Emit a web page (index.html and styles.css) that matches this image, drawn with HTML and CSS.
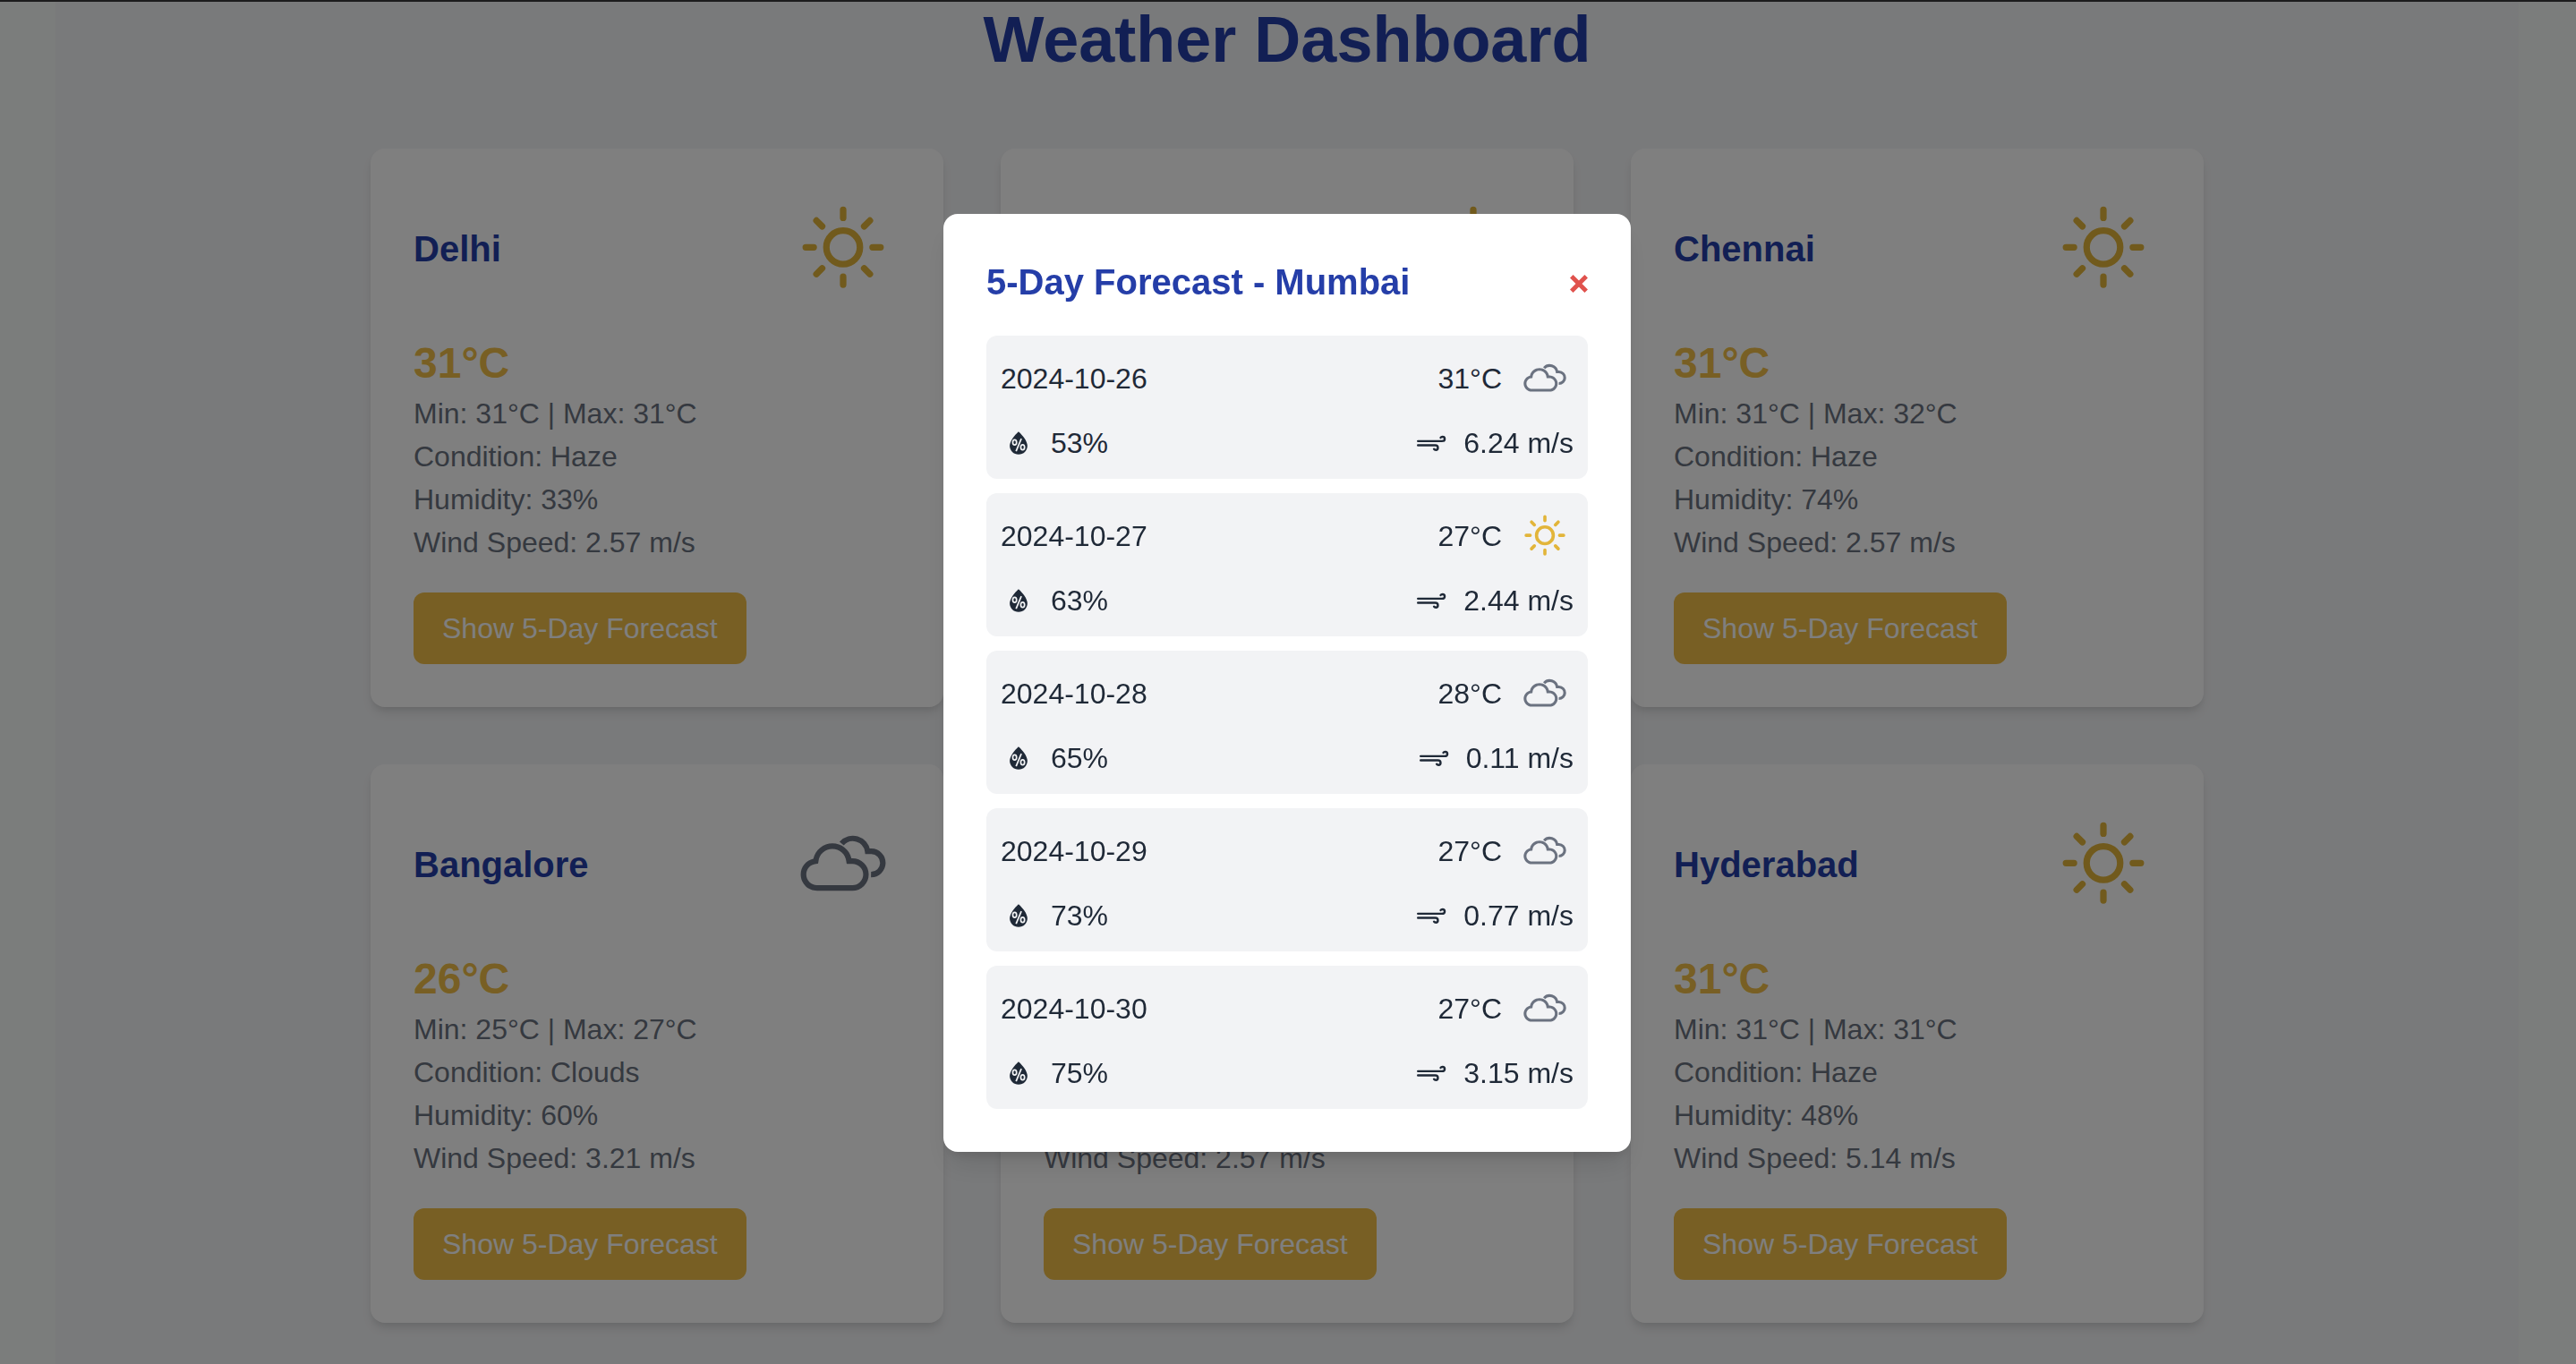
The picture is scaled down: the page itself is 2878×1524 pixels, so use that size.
FILE: index.html
```html
<!DOCTYPE html>
<html lang="en">
<head>
<meta charset="utf-8">
<meta name="viewport" content="width=device-width, initial-scale=1">
<title>Weather Dashboard</title>
<link rel="stylesheet" href="styles.css">
</head>
<body>
<svg class="sprite" aria-hidden="true">
  <symbol id="sun" viewBox="0 0 30 30">
    <g fill="none" stroke="currentColor" stroke-width="1.7" stroke-linecap="round">
      <circle cx="15" cy="14.61" r="4.4"/>
      <path d="M15 4.8v2.1M15 22.3v2.1M5.2 14.61h2.1M22.7 14.61h2.1M8 7.61l1.5 1.5M20.5 20.11l1.5 1.5M22 7.61l-1.5 1.5M9.5 20.11l-1.5 1.5"/>
    </g>
  </symbol>
  <symbol id="cloud" viewBox="0 0 30 30">
    <path fill="currentColor" d="M3.89 17.6c0-.99.31-1.88.93-2.65s1.41-1.27 2.38-1.49c.26-1.17.85-2.14 1.78-2.88.93-.75 2-1.12 3.22-1.12 1.18 0 2.24.36 3.16 1.09.93.73 1.53 1.66 1.8 2.8h.27c1.18 0 2.18.41 3.01 1.24s1.25 1.83 1.25 3c0 1.18-.42 2.18-1.25 3.01s-1.83 1.25-3.01 1.25H8.16c-.58 0-1.13-.11-1.65-.34S5.52 21 5.14 20.62c-.38-.38-.68-.84-.91-1.36s-.34-1.09-.34-1.66zm1.45 0c0 .76.28 1.42.82 1.96s1.21.82 1.99.82h9.28c.77 0 1.44-.27 1.99-.82.55-.55.83-1.2.83-1.96 0-.76-.27-1.42-.83-1.96-.55-.54-1.21-.82-1.99-.82h-1.39c-.1 0-.15-.05-.15-.15l-.07-.49c-.1-.94-.5-1.73-1.19-2.35s-1.51-.93-2.45-.93c-.94 0-1.76.31-2.46.94-.7.62-1.09 1.41-1.18 2.34l-.07.42c0 .1-.05.15-.16.15l-.45.07c-.72.06-1.32.36-1.81.89-.46.53-.71 1.16-.71 1.89z"/>
    <path fill="none" stroke="currentColor" stroke-width="1.45" d="M14.6 9.5A3.9 3.9 0 0 1 21.4 11.5H22.4A3.05 3.05 0 0 1 22.3 17.6M20.8 11.5H22"/>
  </symbol>
  <symbol id="drop" viewBox="0 0 30 30">
    <path fill="currentColor" d="M7.56 17.19c0-.88.24-1.89.72-3.03s1.1-2.25 1.86-3.31c1.56-2.06 2.92-3.62 4.06-4.67l.75-.72c.25.26.53.5.83.72.41.42 1.04 1.11 1.88 2.09s1.57 1.85 2.17 2.65c.71 1.01 1.32 2.1 1.81 3.25s.74 2.16.74 3.03c0 1-.19 1.95-.58 2.86-.39.91-.91 1.7-1.57 2.36-.66.66-1.45 1.19-2.37 1.58-.92.39-1.89.59-2.91.59-1 0-1.95-.19-2.86-.57-.91-.38-1.7-.89-2.36-1.55-.66-.65-1.19-1.44-1.58-2.35s-.59-1.89-.59-2.93z"/>
    <g class="cutout" fill="none" stroke-width="1.3">
      <ellipse cx="11.7" cy="14.4" rx="1.6" ry="2.2"/>
      <ellipse cx="18.4" cy="18.6" rx="1.6" ry="2.2"/>
      <path d="M12.9 21.9L17.3 11.3"/>
    </g>
  </symbol>
  <symbol id="wind" viewBox="0 0 30 30">
    <g fill="none" stroke="currentColor" stroke-width="1.8" stroke-linecap="round">
      <path d="M3.9 13.4H23.9C25.3 13.4 26.3 12.7 26.3 11.6 26.3 10.5 25.5 9.8 24.5 9.8 23.8 9.8 23.2 10 22.9 10.5"/>
      <path d="M3.9 16.9H18.3C19.7 16.9 20.6 17.7 20.6 18.9 20.6 20 19.9 20.8 18.9 20.8 18.2 20.8 17.6 20.5 17.3 20"/>
    </g>
  </symbol>
</svg>

<main class="dashboard">
  <h1>Weather Dashboard</h1>
  <div class="cards">
    <article class="card">
      <header class="card-head"><h2>Delhi</h2><svg class="icon-lg sunny"><use href="#sun"/></svg></header>
      <p class="temp">31°C</p>
      <p>Min: 31°C | Max: 31°C</p>
      <p>Condition: Haze</p>
      <p>Humidity: 33%</p>
      <p>Wind Speed: 2.57 m/s</p>
      <button type="button" class="show">Show 5-Day Forecast</button>
    </article>
    <article class="card">
      <header class="card-head"><h2>Mumbai</h2><svg class="icon-lg sunny"><use href="#sun"/></svg></header>
      <p class="temp">31°C</p>
      <p>Min: 31°C | Max: 31°C</p>
      <p>Condition: Haze</p>
      <p>Humidity: 53%</p>
      <p>Wind Speed: 2.57 m/s</p>
      <button type="button" class="show">Show 5-Day Forecast</button>
    </article>
    <article class="card">
      <header class="card-head"><h2>Chennai</h2><svg class="icon-lg sunny"><use href="#sun"/></svg></header>
      <p class="temp">31°C</p>
      <p>Min: 31°C | Max: 32°C</p>
      <p>Condition: Haze</p>
      <p>Humidity: 74%</p>
      <p>Wind Speed: 2.57 m/s</p>
      <button type="button" class="show">Show 5-Day Forecast</button>
    </article>
    <article class="card">
      <header class="card-head"><h2>Bangalore</h2><svg class="icon-lg cloudy"><use href="#cloud"/></svg></header>
      <p class="temp">26°C</p>
      <p>Min: 25°C | Max: 27°C</p>
      <p>Condition: Clouds</p>
      <p>Humidity: 60%</p>
      <p>Wind Speed: 3.21 m/s</p>
      <button type="button" class="show">Show 5-Day Forecast</button>
    </article>
    <article class="card">
      <header class="card-head"><h2>Kolkata</h2><svg class="icon-lg sunny"><use href="#sun"/></svg></header>
      <p class="temp">31°C</p>
      <p>Min: 31°C | Max: 31°C</p>
      <p>Condition: Haze</p>
      <p>Humidity: 60%</p>
      <p>Wind Speed: 2.57 m/s</p>
      <button type="button" class="show">Show 5-Day Forecast</button>
    </article>
    <article class="card">
      <header class="card-head"><h2>Hyderabad</h2><svg class="icon-lg sunny"><use href="#sun"/></svg></header>
      <p class="temp">31°C</p>
      <p>Min: 31°C | Max: 31°C</p>
      <p>Condition: Haze</p>
      <p>Humidity: 48%</p>
      <p>Wind Speed: 5.14 m/s</p>
      <button type="button" class="show">Show 5-Day Forecast</button>
    </article>
  </div>
</main>

<div class="overlay">
  <section class="modal" role="dialog" aria-modal="true" aria-labelledby="modal-title">
    <header class="modal-head">
      <h2 id="modal-title">5-Day Forecast - Mumbai</h2>
      <button type="button" class="close" aria-label="Close"><svg viewBox="0 0 20 20"><path d="M1.8 1.8L18.2 18.2M18.2 1.8L1.8 18.2" fill="none" stroke="currentColor" stroke-width="5"/></svg></button>
    </header>
    <ul class="days">
      <li class="day">
        <div class="row"><span>2024-10-26</span><span class="pair">31°C<svg class="icon-md cloudy"><use href="#cloud"/></svg></span></div>
        <div class="row"><span class="pair"><svg class="icon-sm"><use href="#drop"/></svg>53%</span><span class="pair"><svg class="icon-sm"><use href="#wind"/></svg>6.24 m/s</span></div>
      </li>
      <li class="day">
        <div class="row"><span>2024-10-27</span><span class="pair">27°C<svg class="icon-md sunny"><use href="#sun"/></svg></span></div>
        <div class="row"><span class="pair"><svg class="icon-sm"><use href="#drop"/></svg>63%</span><span class="pair"><svg class="icon-sm"><use href="#wind"/></svg>2.44 m/s</span></div>
      </li>
      <li class="day">
        <div class="row"><span>2024-10-28</span><span class="pair">28°C<svg class="icon-md cloudy"><use href="#cloud"/></svg></span></div>
        <div class="row"><span class="pair"><svg class="icon-sm"><use href="#drop"/></svg>65%</span><span class="pair"><svg class="icon-sm"><use href="#wind"/></svg>0.11 m/s</span></div>
      </li>
      <li class="day">
        <div class="row"><span>2024-10-29</span><span class="pair">27°C<svg class="icon-md cloudy"><use href="#cloud"/></svg></span></div>
        <div class="row"><span class="pair"><svg class="icon-sm"><use href="#drop"/></svg>73%</span><span class="pair"><svg class="icon-sm"><use href="#wind"/></svg>0.77 m/s</span></div>
      </li>
      <li class="day">
        <div class="row"><span>2024-10-30</span><span class="pair">27°C<svg class="icon-md cloudy"><use href="#cloud"/></svg></span></div>
        <div class="row"><span class="pair"><svg class="icon-sm"><use href="#drop"/></svg>75%</span><span class="pair"><svg class="icon-sm"><use href="#wind"/></svg>3.15 m/s</span></div>
      </li>
    </ul>
  </section>
</div>
</body>
</html>
```
FILE: styles.css
```css
:root {
  --blue: #253ea8;
  --yellow: #f0be48;
  --sun: #e2b53a;
  --muted: #6b7280;
  --ink: #1f2937;
  --panel: #f2f3f5;
}

* {
  box-sizing: border-box;
}

body {
  margin: 0;
  padding: 0 64px 0 62px;
  background: #f7fbf8;
  color: var(--muted);
  font-family: "Liberation Sans", Helvetica, Arial, sans-serif;
  font-size: 32px;
  line-height: 48px;
}

h1,
h2,
p,
ul {
  margin: 0;
  padding: 0;
}

h1,
h2 {
  color: var(--blue);
  font-weight: bold;
}

h1 {
  margin-bottom: 82px;
  font-size: 72px;
  line-height: 80px;
  text-align: center;
}

h2 {
  font-size: 40px;
  line-height: 56px;
}

button {
  border: 0;
  font: inherit;
  cursor: pointer;
}

svg {
  display: block;
  flex: none;
}

.sprite {
  position: absolute;
  width: 0;
  height: 0;
}

.dashboard {
  min-height: 100vh;
  padding: 4px 32px 40px;
  background: #f3f4f6;
}

.cards {
  display: grid;
  grid-template-columns: repeat(3, 1fr);
  gap: 64px;
  max-width: 2048px;
  margin: 0 auto;
}

.card {
  padding: 48px;
  border-radius: 16px;
  background: #fff;
  box-shadow: 0 8px 12px -2px rgba(0, 0, 0, .1), 0 4px 8px -4px rgba(0, 0, 0, .1);
}

.card-head {
  display: flex;
  align-items: center;
  justify-content: space-between;
  margin-bottom: 32px;
}

.temp {
  color: var(--yellow);
  font-size: 48px;
  font-weight: bold;
  line-height: 64px;
}

.show {
  margin-top: 32px;
  padding: 16px 32px;
  border-radius: 12px;
  background: var(--yellow);
  color: #fff;
}

.icon-lg {
  width: 128px;
  height: 128px;
}

.icon-md {
  width: 64px;
  height: 64px;
}

.icon-sm {
  width: 40px;
  height: 40px;
}

.sunny {
  color: var(--sun);
}

.cloudy {
  color: var(--muted);
}

.cutout {
  stroke: var(--panel);
}

.overlay {
  position: fixed;
  inset: 0;
  display: flex;
  align-items: center;
  justify-content: center;
  padding-right: 2px;
  border-top: 2px solid #1c1c1d;
  background: rgba(0, 0, 0, .5);
}

.modal {
  width: 768px;
  max-width: 100%;
  padding: 48px;
  border-radius: 16px;
  background: #fff;
  box-shadow: 0 20px 30px -6px rgba(0, 0, 0, .1), 0 8px 12px -4px rgba(0, 0, 0, .1);
}

.modal-head {
  display: flex;
  align-items: center;
  justify-content: space-between;
  margin-bottom: 32px;
}

.close {
  padding: 4px 0 0;
  background: none;
  color: #e0524d;
}

.close svg {
  width: 20px;
  height: 20px;
}

.days {
  display: flex;
  flex-direction: column;
  gap: 16px;
  list-style: none;
}

.day {
  display: flex;
  flex-direction: column;
  gap: 16px;
  padding: 16px;
  border-radius: 12px;
  background: var(--panel);
  color: var(--ink);
}

.row {
  display: flex;
  align-items: center;
  justify-content: space-between;
}

.pair {
  display: flex;
  align-items: center;
  gap: 16px;
}
```
